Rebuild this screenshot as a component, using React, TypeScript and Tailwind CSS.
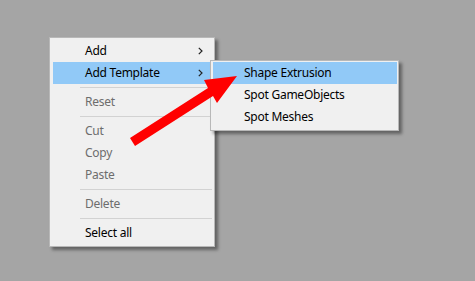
import React from "react";

const Chevron = () => (
  <svg width="5" height="8" viewBox="0 0 5 8" className="block">
    <path d="M0.8 0.8 L4 4 L0.8 7.2" fill="none" stroke="#222" strokeWidth="1.2" />
  </svg>
);

const Item = ({
  label,
  disabled,
  hl,
  sub,
}: {
  label: string;
  disabled?: boolean;
  hl?: boolean;
  sub?: boolean;
}) => (
  <div
    className={`h-[22px] flex items-center justify-between pl-[32px] pr-[9px] ${
      hl ? "bg-[#91c9f7]" : ""
    } ${disabled ? "text-[#6d6d6d]" : "text-black"}`}
  >
    <span className="leading-none">{label}</span>
    {sub ? <Chevron /> : null}
  </div>
);

const Sep = () => (
  <div className="h-[7px] flex items-center pl-[27px]">
    <div className="h-px w-full bg-[#d2d2d2]" />
  </div>
);

const SubItem = ({ label, hl }: { label: string; hl?: boolean }) => (
  <div className={`h-[22px] flex items-center pl-[31px] text-black ${hl ? "bg-[#91c9f7]" : ""}`}>
    <span className="leading-none">{label}</span>
  </div>
);

export default function App() {
  return (
    <div
      className="relative w-[475px] h-[281px] bg-[#a5a5a5] overflow-hidden text-[12px] tracking-[-0.25px]"
      style={{ fontFamily: '"Noto Sans", "Liberation Sans", sans-serif' }}
    >
      <div className="pt-[37px] pl-[49px]">
        <div className="w-[166px] border border-[#b8b8b8] bg-[#f0f0f0] pt-[2px] pb-[2px] pl-[3px] pr-[2px] shadow-[3px_3px_3px_rgba(0,0,0,0.4)]">
          <Item label="Add" sub />
          <Item label="Add Template" sub hl />
          <Sep />
          <Item label="Reset" disabled />
          <Sep />
          <Item label="Cut" disabled />
          <Item label="Copy" disabled />
          <Item label="Paste" disabled />
          <Sep />
          <Item label="Delete" disabled />
          <Sep />
          <Item label="Select all" />
        </div>
      </div>

      <div className="absolute left-[210px] top-[60px] w-[189px] border border-[#b8b8b8] bg-[#f0f0f0] pt-[1px] pb-[2px] pl-[2px] pr-[1px] shadow-[3px_3px_3px_rgba(0,0,0,0.4)]">
        <SubItem label="Shape Extrusion" hl />
        <SubItem label="Spot GameObjects" />
        <SubItem label="Spot Meshes" />
      </div>

      <svg
        className="absolute left-0 top-0 pointer-events-none"
        width="475"
        height="281"
        viewBox="0 0 475 281"
      >
        <polygon
          points="130,138 208,88 204,80 237,76 217,103 213,96 135,146"
          fill="#ff0000"
        />
      </svg>
    </div>
  );
}
